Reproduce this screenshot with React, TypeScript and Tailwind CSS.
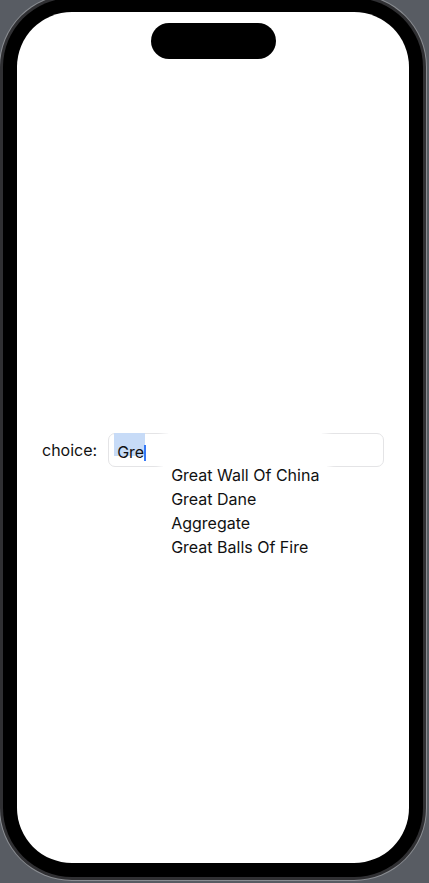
import React from "react";

const options = ["Great Wall Of China", "Great Dane", "Aggregate", "Great Balls Of Fire"];

function ChoiceField() {
  return (
    <div className="flex items-center px-[25px] text-[16px] text-[#111]">
      <span>choice:</span>
      <div className="relative ml-[11px] h-[34px] flex-1 rounded-[7px] border border-[#e4e4e6]">
        {/* selected text + caret */}
        <span className="absolute left-[5px] top-[-1px] h-[23px] w-[31px] bg-[#c7dbf7]" />
        <div className="relative flex h-full items-center pl-[8px] pt-[4px]">
          <span>Gre</span>
          <span className="h-[16px] w-[2px] translate-y-[1px] bg-[#3478f6]" />
        </div>

        {/* suggestion list */}
        <div className="absolute left-[54px] top-[-2px] w-[164px] rounded-[10px] bg-white pl-[8px] pt-[31px] pb-[10px] shadow-[0_0_6px_3px_white]">
          {options.map((o) => (
            <div key={o} className="h-[24px] leading-[24px] whitespace-nowrap">
              {o}
            </div>
          ))}
        </div>
      </div>
    </div>
  );
}

export default function App() {
  return (
    <div
      className="flex h-[883px] w-full items-center justify-center overflow-hidden bg-[#585c63]"
      style={{ fontFamily: "Inter, 'Noto Sans', sans-serif" }}
    >
      <div className="mr-[3px] mb-[8px] shrink-0 rounded-[73px] bg-[#8a8d92] p-[1px]">
        <div className="rounded-[72px] bg-[#303033] p-[3px]">
          <div className="rounded-[69px] bg-black p-[14px]">
            <div className="flex h-[851px] w-[392px] flex-col overflow-hidden rounded-[55px] bg-white">
              <div className="mt-[11px] h-[36px] w-[125px] self-center rounded-full bg-black" />
              <div className="mt-[374px]">
                <ChoiceField />
              </div>
            </div>
          </div>
        </div>
      </div>
    </div>
  );
}
